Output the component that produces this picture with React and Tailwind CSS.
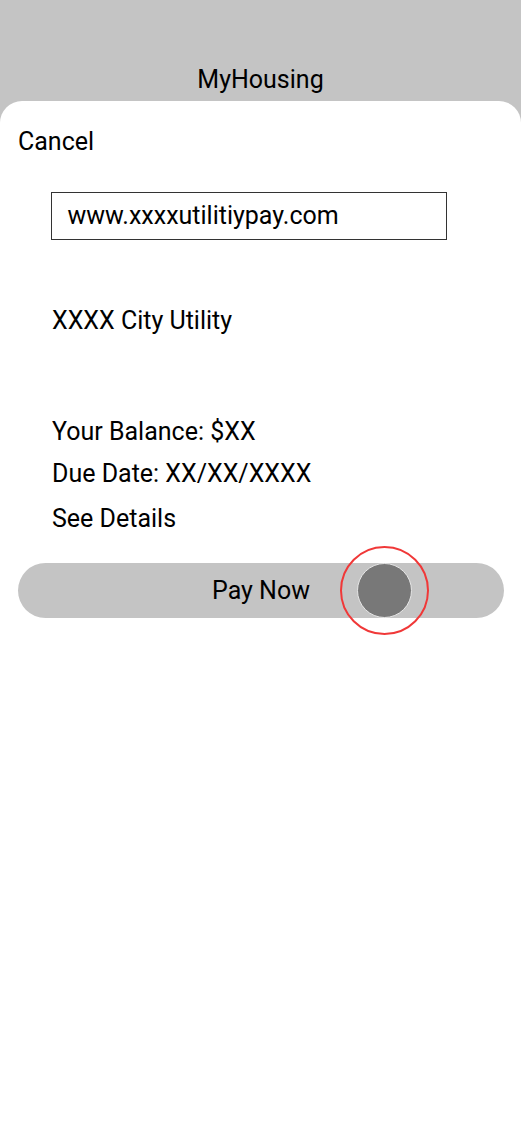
export default function App() {
  return (
    <div
      className="min-h-[1128px] flex flex-col bg-[#c4c4c4] text-black"
      style={{ fontFamily: "Roboto, 'Liberation Sans', sans-serif" }}
    >
      <header className="h-[101px] shrink-0 pt-[66px] text-center text-[25px] leading-[28px]">
        MyHousing
      </header>
      <main className="flex-1 bg-white rounded-t-[22px] flex flex-col pt-[27px] text-[25px] leading-[28px]">
        <button className="self-start ml-[18px] text-left">Cancel</button>
        <div className="mt-[36px] ml-[51px] w-[396px] h-[48px] border-[1.5px] border-[#333] flex items-center pl-[15.5px]">
          www.xxxxutilitiypay.com
        </div>
        <div className="mt-[67px] ml-[52px]">XXXX City Utility</div>
        <div className="mt-[83px] ml-[52px]">Your Balance: $XX</div>
        <div className="mt-[13.5px] ml-[52px]">Due Date: XX/XX/XXXX</div>
        <div className="mt-[17.5px] ml-[52px]">See Details</div>
        <div className="relative mt-[30px] ml-[18px] w-[486px] h-[55px] rounded-full bg-[#c4c4c4] flex items-center justify-center">
          <span>Pay Now</span>
          <div className="absolute left-[338.5px] top-0 w-[55px] h-[55px] rounded-full bg-[#787878] border border-[#e6e6e6]" />
          <div className="absolute left-[321.5px] top-[-17px] w-[89px] h-[89px] rounded-full border-[2.5px] border-[#f03838]" />
        </div>
      </main>
    </div>
  );
}
